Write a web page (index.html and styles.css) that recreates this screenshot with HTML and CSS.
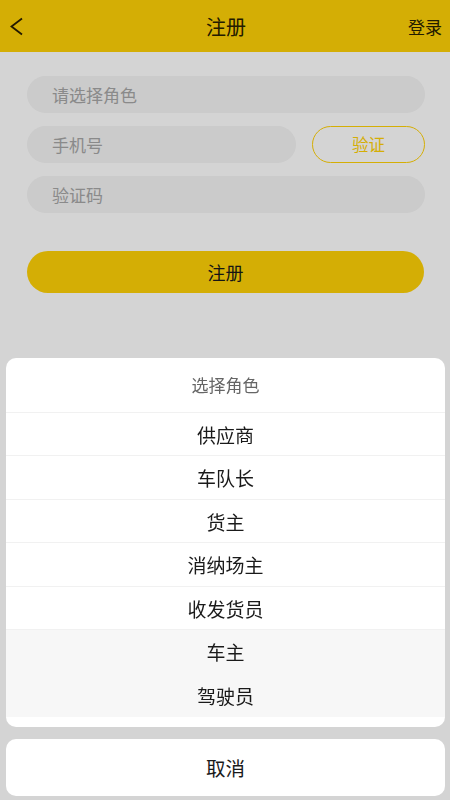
FILE: index.html
```html
<!DOCTYPE html>
<html lang="zh-CN">

<head>
    <meta charset="UTF-8">
    <meta name="viewport" content="width=device-width, initial-scale=1.0">
    <title>注册</title>
    <link rel="stylesheet" href="styles.css">
</head>

<body>

    <header class="nav-bar">
        <span class="nav-back">
            <svg width="14" height="20" viewBox="0 0 14 20">
                <polyline points="12,1.5 1.5,9.5 12,17.5" fill="none" stroke="#2b1f00" stroke-width="1.8" />
            </svg>
        </span>
        <h1 class="nav-title">注册</h1>
        <span class="nav-login">登录</span>
    </header>

    <div class="form">
        <div class="field">请选择角色</div>
        <div class="field-row">
            <div class="field field-phone">手机号</div>
            <div class="verify-btn">验证</div>
        </div>
        <div class="field">验证码</div>
        <div class="submit-btn">注册</div>
    </div>

    <!-- role picker sheet -->
    <div class="mask">
        <div class="sheet">
            <div class="sheet-title">选择角色</div>
            <ul class="sheet-list">
                <li>供应商</li>
                <li>车队长</li>
                <li>货主</li>
                <li>消纳场主</li>
                <li>收发货员</li>
                <li class="active">车主</li>
                <li class="active">驾驶员</li>
            </ul>
        </div>
        <div class="sheet-cancel">取消</div>
    </div>

</body>

</html>
```

FILE: styles.css
```css
body {
    font-family: "Noto Sans CJK SC", "Noto Sans", sans-serif;
    background-color: #fff;
    margin: 0;
    padding: 0;
    height: 800px;
    color: #222;
}

.nav-bar {
    display: flex;
    align-items: center;
    height: 52px;
    background-color: #ffd207;
}

.nav-back {
    display: flex;
    width: 44px;
    padding-left: 10px;
    padding-top: 2px;
}

.nav-title {
    flex: 1;
    margin: 0;
    text-align: center;
    font-size: 20px;
    font-weight: normal;
    color: #2a2200;
}

.nav-login {
    width: 44px;
    padding-right: 8px;
    text-align: right;
    font-size: 17px;
    color: #2a2200;
}

.form {
    display: flex;
    flex-direction: column;
    gap: 13px;
    padding: 24px 25px 0 27px;
}

.field-row {
    display: flex;
    gap: 16px;
}

.field {
    height: 37px;
    line-height: 37px;
    border-radius: 19px;
    background-color: #f4f4f4;
    padding-left: 25px;
    font-size: 17px;
    color: #a6a6a6;
}

.field-phone {
    flex: 1;
}

.verify-btn {
    width: 111px;
    height: 35px;
    line-height: 35px;
    border: 1px solid #ffd207;
    border-radius: 19px;
    text-align: center;
    font-size: 16.5px;
    color: #ffd207;
}

.submit-btn {
    margin-top: 25px;
    margin-right: 1px;
    height: 42px;
    line-height: 42px;
    border-radius: 21px;
    background-color: #ffd207;
    text-align: center;
    font-size: 18px;
    color: #1a1a1a;
}

.mask {
    position: fixed;
    top: 0;
    left: 0;
    right: 0;
    bottom: 0;
    background-color: rgba(0, 0, 0, 0.17);
    display: flex;
    flex-direction: column;
    justify-content: flex-end;
    padding: 0 5px 4px 6px;
    gap: 12px;
}

.sheet {
    background-color: #fff;
    border-radius: 10px;
    padding-bottom: 10px;
    overflow: hidden;
}

.sheet-title {
    height: 55px;
    line-height: 54px;
    text-align: center;
    font-size: 17px;
    color: #666;
    border-bottom: 1px solid #f1f1f1;
    box-sizing: border-box;
}

.sheet-list {
    list-style: none;
    margin: 0;
    padding: 0;
}

.sheet-list li {
    height: 43.5px;
    line-height: 43px;
    text-align: center;
    font-size: 19px;
    color: #1a1a1a;
    border-bottom: 1px solid #f1f1f1;
    box-sizing: border-box;
}

.sheet-list li.active {
    background-color: #f7f7f7;
    border-bottom: none;
}

.sheet-cancel {
    height: 57px;
    line-height: 58px;
    border-radius: 10px;
    background-color: #fff;
    text-align: center;
    font-size: 19.5px;
    color: #1a1a1a;
}
```
